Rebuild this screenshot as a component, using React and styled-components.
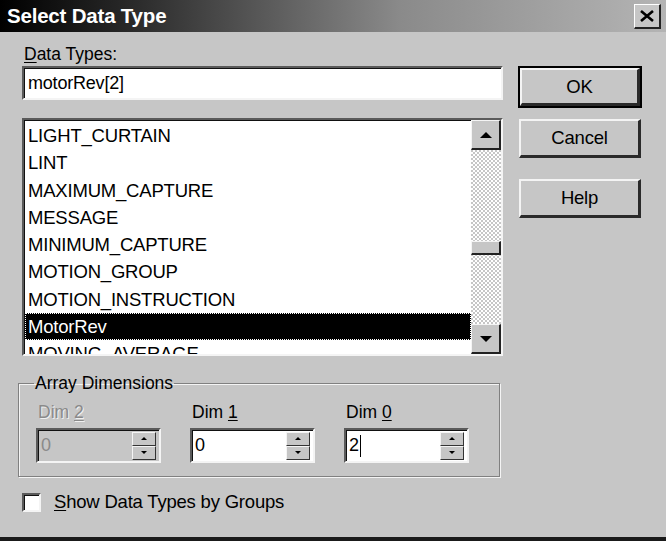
import React from 'react';
import styled, { createGlobalStyle } from 'styled-components';

const Global = createGlobalStyle`
  html, body { margin: 0; padding: 0; background: #c6c6c6; }
  body { font-family: "Liberation Sans", Arial, sans-serif; }
`;

const Window = styled.div`
  width: 666px;
  height: 541px;
  box-sizing: border-box;
  background: #c6c6c6;
  border-bottom: 4px solid #1a1a1a;
  display: flex;
  flex-direction: column;
  color: #000;
  font-size: 17.5px;
  overflow: hidden;
`;

const TitleBar = styled.div`
  height: 32px;
  flex: none;
  display: flex;
  align-items: center;
  justify-content: space-between;
  padding: 0 5px 0 7px;
  background: linear-gradient(90deg, #000 0%, #2a2a2a 20%, #8a8a8a 60%, #b4b4b4 100%);
`;

const Title = styled.span`
  color: #fff;
  font-weight: bold;
  font-size: 20.5px;
  letter-spacing: -0.2px;
`;

const CloseBtn = styled.div`
  width: 24px;
  height: 22px;
  background: #c6c6c6;
  border-top: 1px solid #fff;
  border-left: 1px solid #fff;
  border-right: 2px solid #222;
  border-bottom: 2px solid #222;
  display: flex;
  align-items: center;
  justify-content: center;
`;

const Body = styled.div`
  display: grid;
  grid-template-columns: 481px 122px;
  column-gap: 16px;
  padding: 12px 0 0 22px;
`;

const LeftCol = styled.div`
  display: flex;
  flex-direction: column;
`;

const RightCol = styled.div`
  display: flex;
  flex-direction: column;
  gap: 13px;
  padding-top: 22px;
`;

const Label = styled.label`
  font-size: 17.5px;
  line-height: 20px;
  padding-left: 2px;
  margin-bottom: ${p => p.gap || 2}px;
  color: ${p => (p.disabled ? '#8a8a8a' : '#000')};
  text-shadow: ${p => (p.disabled ? '1px 1px 0 #f0f0f0' : 'none')};
`;

const Sunken = styled.div`
  box-sizing: border-box;
  border-top: 2px solid #5a5a5a;
  border-left: 2px solid #5a5a5a;
  border-right: 2px solid #f4f4f4;
  border-bottom: 2px solid #f4f4f4;
  box-shadow: inset 1px 1px 0 #111;
`;

const TextBox = styled(Sunken)`
  height: 34px;
  background: #fff;
  display: flex;
  align-items: center;
  padding-left: 4px;
  font-size: 18px;
  letter-spacing: -0.2px;
`;

const ListBox = styled(Sunken)`
  margin-top: 18px;
  height: 238px;
  background: #fff;
  display: flex;
  overflow: hidden;
`;

const Items = styled.div`
  flex: 1;
  padding-top: 2px;
  padding-left: 1px;
  overflow: hidden;
`;

const Item = styled.div`
  height: 27.3px;
  line-height: 27px;
  padding-left: 3px;
  font-size: 18.5px;
  letter-spacing: -0.2px;
  white-space: nowrap;
  background: ${p => (p.selected ? '#000' : 'transparent')};
  color: ${p => (p.selected ? '#fff' : '#000')};
  outline: ${p => (p.selected ? '1px dotted #fff' : 'none')};
  outline-offset: -1px;
`;

const ScrollBar = styled.div`
  width: 30px;
  flex: none;
  display: flex;
  flex-direction: column;
  background: repeating-conic-gradient(#c6c6c6 0 25%, #fff 0 50%) 0 0 / 4px 4px;
`;

const ScrollBtn = styled.div`
  height: ${p => p.h || 30}px;
  flex: none;
  box-sizing: border-box;
  background: #c6c6c6;
  border-top: 1px solid #f4f4f4;
  border-left: 1px solid #f4f4f4;
  border-right: 2px solid #222;
  border-bottom: 2px solid #222;
  display: flex;
  align-items: center;
  justify-content: center;
`;

const Track = styled.div`
  flex: 1;
  display: flex;
  flex-direction: column;
  padding-top: ${p => p.offset}px;
`;

const Button = styled.div`
  height: ${p => (p.isDefault ? 38 : 39)}px;
  box-sizing: border-box;
  background: #c6c6c6;
  display: flex;
  align-items: center;
  justify-content: center;
  font-size: 18.5px;
  letter-spacing: -0.2px;
  border-top: 2px solid #f4f4f4;
  border-left: 2px solid #f4f4f4;
  border-right: 3px solid #2a2a2a;
  border-bottom: 3px solid #2a2a2a;
  box-shadow: ${p => (p.isDefault ? '0 0 0 2px #000' : 'none')};
  margin: ${p => (p.isDefault ? '2px 1px 0 1px' : '0')};
`;

const Group = styled.fieldset`
  margin: 17px 0 0 18px;
  width: 482px;
  height: 104px;
  box-sizing: border-box;
  border: 1px solid #808080;
  box-shadow: inset 1px 1px 0 #f4f4f4, 1px 1px 0 #f4f4f4;
  padding: 0 0 0 17px;
  display: flex;
  gap: 29px;
`;

const Legend = styled.legend`
  font-size: 17.5px;
  padding: 0 1px;
  margin-left: -2px;
`;

const DimCol = styled.div`
  display: flex;
  flex-direction: column;
  margin-top: 8px;
`;

const SpinBox = styled(Sunken)`
  width: 125px;
  height: 35px;
  flex: none;
  display: flex;
  align-items: center;
  background: ${p => (p.disabled ? '#c6c6c6' : '#fff')};
  color: ${p => (p.disabled ? '#8a8a8a' : '#000')};
  font-size: 18px;
  padding-left: 3px;
`;

const SpinText = styled.span`
  flex: 1;
  display: flex;
  align-items: center;
`;

const Caret = styled.span`
  width: 1px;
  height: 22px;
  background: #000;
  margin-left: 1px;
`;

const SpinArrows = styled.div`
  display: flex;
  flex-direction: column;
  margin-right: 3px;
`;

const SpinBtn = styled.div`
  width: 24px;
  height: 14px;
  box-sizing: border-box;
  background: #c6c6c6;
  border-top: 1px solid #f4f4f4;
  border-left: 1px solid #f4f4f4;
  border-right: 1px solid #333;
  border-bottom: 1px solid #333;
  display: flex;
  align-items: center;
  justify-content: center;
`;

const CheckRow = styled.div`
  display: flex;
  align-items: center;
  gap: 13px;
  margin: 14px 0 0 22px;
  font-size: 18.5px;
  letter-spacing: -0.2px;
`;

const CheckBox = styled(Sunken)`
  width: 19px;
  height: 19px;
  background: #fff;
`;

const U = styled.span`
  text-decoration: underline;
  text-underline-offset: 2px;
`;

const Tri = ({ down, size = 6 }) => (
  <svg width={size * 2} height={size} viewBox="0 0 12 6">
    {down ? <polygon points="0,0 12,0 6,6" fill="#000" /> : <polygon points="0,6 12,6 6,0" fill="#000" />}
  </svg>
);

const items = [
  'LIGHT_CURTAIN',
  'LINT',
  'MAXIMUM_CAPTURE',
  'MESSAGE',
  'MINIMUM_CAPTURE',
  'MOTION_GROUP',
  'MOTION_INSTRUCTION',
  'MotorRev',
  'MOVING_AVERAGE',
];

const Spin = ({ value, disabled, caret }) => (
  <SpinBox disabled={disabled}>
    <SpinText>
      {value}
      {caret && <Caret />}
    </SpinText>
    <SpinArrows>
      <SpinBtn><Tri size={3} /></SpinBtn>
      <SpinBtn><Tri size={3} down /></SpinBtn>
    </SpinArrows>
  </SpinBox>
);

export default function App() {
  return (
    <Window>
      <Global />
      <TitleBar>
        <Title>Select Data Type</Title>
        <CloseBtn>
          <svg width="14" height="12" viewBox="0 0 14 12">
            <path d="M1 1 L13 11 M13 1 L1 11" stroke="#000" strokeWidth="2.6" />
          </svg>
        </CloseBtn>
      </TitleBar>
      <Body>
        <LeftCol>
          <Label><U>D</U>ata Types:</Label>
          <TextBox>motorRev[2]</TextBox>
          <ListBox>
            <Items>
              {items.map(t => (
                <Item key={t} selected={t === 'MotorRev'}>{t}</Item>
              ))}
            </Items>
            <ScrollBar>
              <ScrollBtn><Tri /></ScrollBtn>
              <Track offset={91}>
                <ScrollBtn h={14} />
              </Track>
              <ScrollBtn><Tri down /></ScrollBtn>
            </ScrollBar>
          </ListBox>
        </LeftCol>
        <RightCol>
          <Button isDefault>OK</Button>
          <Button>Cancel</Button>
          <Button style={{ marginTop: 8 }}>Help</Button>
        </RightCol>
      </Body>
      <Group>
        <Legend>Array Dimensions</Legend>
        <DimCol>
          <Label disabled gap={6}>Dim <U>2</U></Label>
          <Spin value="0" disabled />
        </DimCol>
        <DimCol>
          <Label gap={6}>Dim <U>1</U></Label>
          <Spin value="0" />
        </DimCol>
        <DimCol>
          <Label gap={6}>Dim <U>0</U></Label>
          <Spin value="2" caret />
        </DimCol>
      </Group>
      <CheckRow>
        <CheckBox />
        <span><U>S</U>how Data Types by Groups</span>
      </CheckRow>
    </Window>
  );
}
